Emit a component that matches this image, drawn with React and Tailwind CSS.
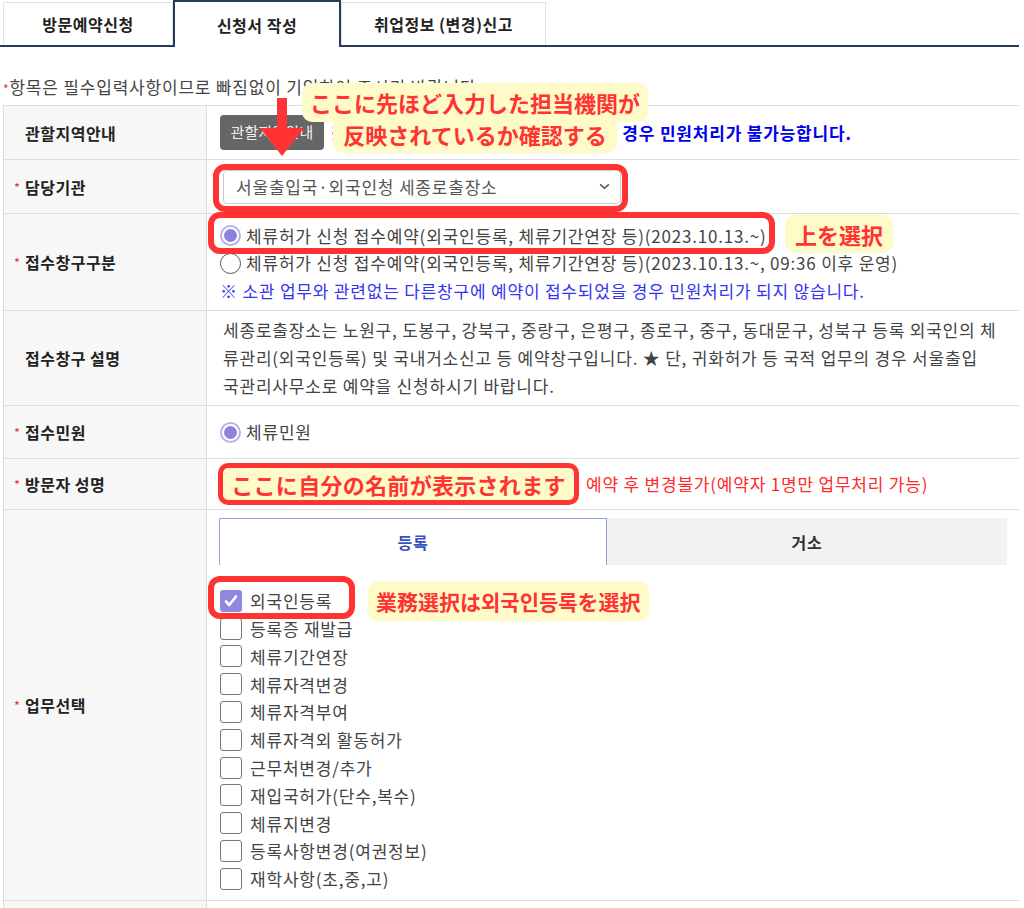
const jobs = [
  '외국인등록',
  '등록증 재발급',
  '체류기간연장',
  '체류자격변경',
  '체류자격부여',
  '체류자격외 활동허가',
  '근무처변경/추가',
  '재입국허가(단수,복수)',
  '체류지변경',
  '등록사항변경(여권정보)',
  '재학사항(초,중,고)',
]

function Radio({ checked }) {
  if (checked) {
    return (
      <span className="flex h-[21px] w-[21px] shrink-0 items-center justify-center rounded-full border-2 border-[#b9b3ec] bg-white">
        <span className="h-[13px] w-[13px] rounded-full bg-[#8c84d9]" />
      </span>
    )
  }
  return <span className="h-[21px] w-[21px] shrink-0 rounded-full border border-[#555] bg-white" />
}

function Checkbox({ checked }) {
  if (checked) {
    return (
      <span className="flex h-[22px] w-[22px] shrink-0 items-center justify-center rounded-[3px] bg-[#8f88de]">
        <svg viewBox="0 0 16 16" className="h-[16px] w-[16px]" fill="none" stroke="white" strokeWidth="2.6" strokeLinecap="round" strokeLinejoin="round">
          <path d="M3 8.5l3.2 3.5L13 3.5" />
        </svg>
      </span>
    )
  }
  return <span className="h-[22px] w-[22px] shrink-0 rounded-[3px] border border-[#777] bg-white" />
}

function Label({ required, children }) {
  return (
    <div className="flex items-center border-r border-[#ddd] bg-[#f7f7f7] pl-[10px] text-[16px] font-bold tracking-[0.5px] text-[#222]">
      {required ? <span className="mr-[3px] w-[8px] pt-[2px] text-[13px] font-normal text-[#e33]">*</span> : <span className="w-[11px]" />}
      {children}
    </div>
  )
}

function Row({ h, label, required, children, className = '' }) {
  return (
    <div className={`grid grid-cols-[203px_1fr] border-b border-[#ddd] ${h}`}>
      <Label required={required}>{label}</Label>
      <div className={`flex ${className}`}>{children}</div>
    </div>
  )
}

export default function App() {
  return (
    <div className="relative h-[908px] w-[1024px] overflow-hidden bg-white font-['Noto_Sans_CJK_KR',sans-serif] text-[#444]">
      {/* tabs */}
      <div className="flex h-[47px] w-[1019px] items-end border-b-2 border-[#283a5e] pl-[3px] text-[16px] font-bold tracking-[0.5px] text-[#222]">
        <div className="flex h-[43px] w-[170px] items-center justify-center border border-b-0 border-[#e2e2e2]">방문예약신청</div>
        <div className="-mb-[2px] flex h-[47px] w-[168px] items-center justify-center border-2 border-b-0 border-[#283a5e] bg-white">신청서 작성</div>
        <div className="flex h-[43px] w-[205px] items-center justify-center border border-b-0 border-[#e2e2e2]">취업정보 (변경)신고</div>
      </div>

      <p className="mt-[30px] pl-[3px] text-[17px] leading-[20px] tracking-[0.8px] text-[#444]">
        <span className="text-[12px] text-[#e33]">*</span>항목은 필수입력사항이므로 빠짐없이 기입하여 주시기 바랍니다.
      </p>

      {/* form table */}
      <div className="ml-[3px] mt-[6px] w-[1016px] border-l border-t border-[#ddd] text-[17px] tracking-[0.8px]">
        <Row h="h-[54px]" label="관할지역안내" className="items-center pl-[13px]">
          <span className="flex h-[35px] w-[104px] items-center justify-center rounded-[4px] bg-[#666] text-[15px] tracking-normal text-[#eee]">관할지역안내</span>
          <span className="ml-[6px] whitespace-nowrap font-bold text-[#0000ee]">※ 관할지역 외에 사는 외국인이 예약할 경우 민원처리가 불가능합니다.</span>
        </Row>

        <Row h="h-[54px]" label="담당기관" required className="items-center pl-[16px]">
          <div className="flex h-[34px] w-[398px] items-center justify-between rounded-[4px] border border-[#ccc] bg-white pl-[12px] pr-[10px] text-[#555]">
            <span>서울출입국·외국인청 세종로출장소</span>
            <svg viewBox="0 0 12 8" className="h-[7px] w-[11px]" fill="none" stroke="#555" strokeWidth="1.8"><path d="M1 1.5l5 4.5 5-4.5" /></svg>
          </div>
        </Row>

        <Row h="h-[97px]" label="접수창구구분" required className="flex-col justify-center whitespace-nowrap pl-[13px] pt-[2px] leading-[27.5px]">
          <div className="flex items-center gap-[5px]">
            <Radio checked />
            <span>체류허가 신청 접수예약(외국인등록, 체류기간연장 등)(2023.10.13.~)</span>
          </div>
          <div className="flex items-center gap-[5px]">
            <Radio />
            <span>체류허가 신청 접수예약(외국인등록, 체류기간연장 등)(2023.10.13.~, 09:36 이후 운영)</span>
          </div>
          <div className="text-[#3535f0]">※ 소관 업무와 관련없는 다른창구에 예약이 접수되었을 경우 민원처리가 되지 않습니다.</div>
        </Row>

        <Row h="h-[95px]" label="접수창구 설명" className="items-center whitespace-nowrap pl-[16px] leading-[28px]">
          <p>
            세종로출장소는 노원구, 도봉구, 강북구, 중랑구, 은평구, 종로구, 중구, 동대문구, 성북구 등록 외국인의 체
            <br />
            류관리(외국인등록) 및 국내거소신고 등 예약창구입니다. ★ 단, 귀화허가 등 국적 업무의 경우 서울출입
            <br />
            국관리사무소로 예약을 신청하시기 바랍니다.
          </p>
        </Row>

        <Row h="h-[53px]" label="접수민원" required className="items-center gap-[5px] pl-[13px]">
          <Radio checked />
          <span>체류민원</span>
        </Row>

        <Row h="h-[51px]" label="방문자 성명" required className="items-center pl-[11px]">
          <div className="flex h-[42px] w-[361px] items-center justify-center rounded-[10px] border-[5px] border-[#ff3333] bg-[#fffbc8] font-['Noto_Sans_CJK_JP',sans-serif] text-[22px] font-bold tracking-[0.3px] text-[#ff3333]">
            ここに自分の名前が表示されます
          </div>
          <span className="ml-[7px] whitespace-nowrap text-[#ff2a2a]">예약 후 변경불가(예약자 1명만 업무처리 가능)</span>
        </Row>

        <Row h="h-[391px]" label="업무선택" required className="flex-col pl-[12px] pr-[12px] pt-[8px]">
          <div className="flex h-[47px] w-[788px] text-[16px] font-bold">
            <div className="flex w-[388px] items-center justify-center border border-b-0 border-[#8fa3e4] bg-white text-[#3a4fc4]">등록</div>
            <div className="flex flex-1 items-center justify-center bg-[#f2f2f2] text-[#333]">거소</div>
          </div>
          <ul className="mt-[22px] pl-[1px]">
            {jobs.map((j, i) => (
              <li key={j} className="flex h-[27.8px] items-center gap-[8px]">
                <Checkbox checked={i === 0} />
                <span>{j}</span>
              </li>
            ))}
          </ul>
        </Row>

        <Row h="h-[40px]" label="" />
      </div>

      {/* annotations */}
      <svg className="absolute left-[260px] top-[98px]" width="44" height="58" viewBox="0 0 44 58">
        <rect x="17" y="0" width="10" height="32" fill="#ff3333" />
        <polygon points="0,30 44,30 22,58" fill="#ff3333" />
      </svg>

      <div className="absolute left-[301px] top-[83px] flex w-[348px] flex-col items-center font-['Noto_Sans_CJK_JP',sans-serif] text-[22px] font-bold text-[#ff3333]">
        <span className="whitespace-nowrap rounded-[10px] bg-[#fffbc8] px-[8px] leading-[39px]">ここに先ほど入力した担当機関が</span>
        <span className="-mt-[6px] whitespace-nowrap rounded-[10px] bg-[#fffbc8] px-[10px] leading-[37px]">反映されているか確認する</span>
      </div>

      <div className="absolute left-[213px] top-[164px] h-[48px] w-[415px] rounded-[12px] border-[6px] border-[#ff3333]" />
      <div className="absolute left-[208px] top-[212px] h-[42px] w-[567px] rounded-[12px] border-[6px] border-[#ff3333]" />
      <div className="absolute left-[785px] top-[215px] rounded-[10px] bg-[#fffbc8] px-[10px] font-['Noto_Sans_CJK_JP',sans-serif] text-[22px] font-bold leading-[38px] text-[#ff3333]">上を選択</div>

      <div className="absolute left-[208px] top-[576px] h-[43px] w-[147px] rounded-[12px] border-[6px] border-[#ff3333]" />
      <div className="absolute left-[368px] top-[581px] rounded-[10px] bg-[#fffbc8] px-[8px] font-['Noto_Sans_CJK_JP','Noto_Sans_CJK_KR',sans-serif] text-[21px] font-bold leading-[40px] text-[#ff3333]">業務選択は외국인등록を選択</div>
    </div>
  )
}
